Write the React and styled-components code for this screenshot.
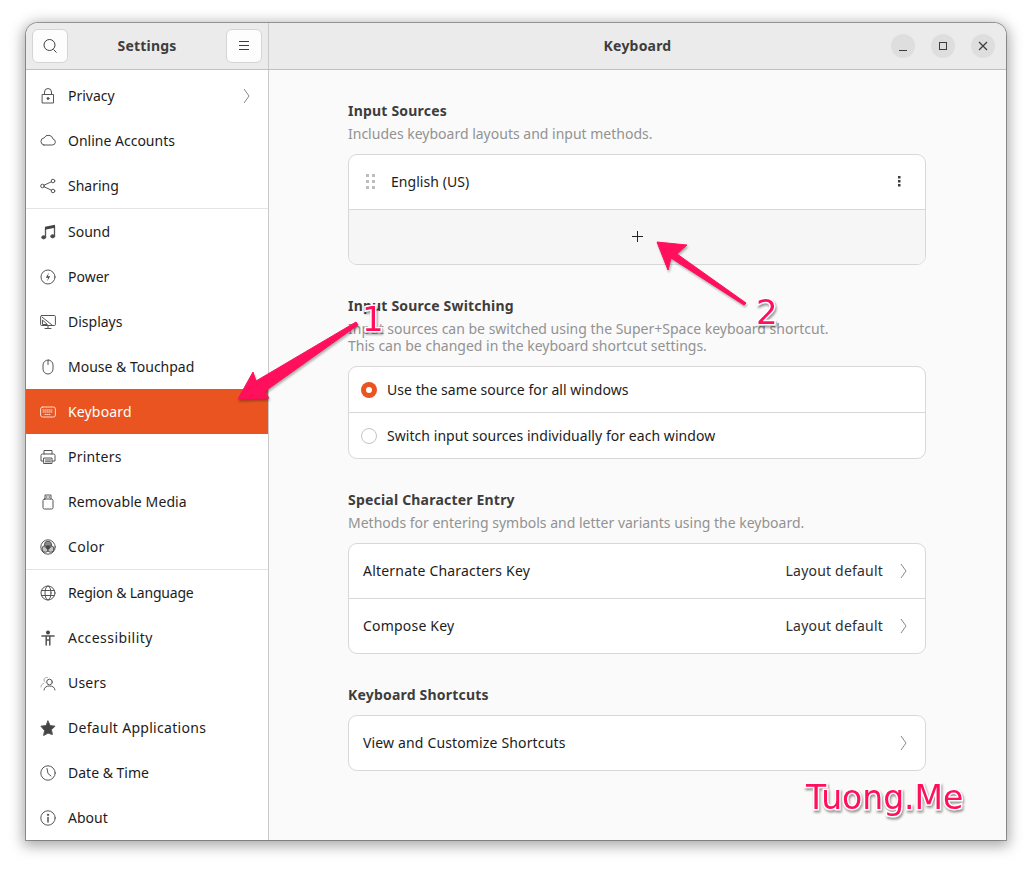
import React from 'react';
import styled, { createGlobalStyle } from 'styled-components';

const GlobalStyle = createGlobalStyle`
  html, body {
    margin: 0;
    padding: 0;
    background: #fff;
  }
  body {
    font-family: "Noto Sans", "Open Sans", sans-serif;
    font-size: 14px;
    color: #2e2e2e;
  }
`;

const Page = styled.div`
  position: relative;
  width: 1032px;
  height: 869px;
  padding: 23px 26px 29px;
  box-sizing: border-box;
  overflow: hidden;
`;

const Window = styled.div`
  width: 980px;
  height: 817px;
  display: flex;
  flex-direction: column;
  border-radius: 12px 12px 0 0;
  overflow: hidden;
  box-shadow: 0 0 0 1px rgba(0, 0, 0, 0.32), 0 3px 14px 3px rgba(0, 0, 0, 0.34);
  background: #fafafa;
`;

const TitleBar = styled.header`
  height: 46px;
  flex: none;
  display: flex;
  background: #ebebeb;
  border-bottom: 1px solid #c0c0c0;
`;

const SideHeader = styled.div`
  width: 243px;
  flex: none;
  display: flex;
  align-items: center;
  justify-content: space-between;
  padding: 0 6px;
  box-sizing: border-box;
  border-right: 1px solid #c9c9c9;
`;

const MainHeader = styled.div`
  flex: 1;
  position: relative;
  display: flex;
  align-items: center;
  justify-content: center;
`;

const HeaderTitle = styled.div`
  font-weight: 700;
  font-size: 14px;
  letter-spacing: 0.2px;
  color: #3d3d3d;
  margin-bottom: 2px;
`;

const ToolButton = styled.button`
  width: 36px;
  height: 34px;
  padding: 0;
  display: flex;
  align-items: center;
  justify-content: center;
  background: #fdfdfd;
  border: 1px solid #d4d4d4;
  border-radius: 6px;
`;

const WindowControls = styled.div`
  position: absolute;
  right: 11px;
  top: 11px;
  display: flex;
  gap: 16px;
`;

const ControlButton = styled.button`
  width: 24px;
  height: 24px;
  padding: 0;
  border: 0;
  border-radius: 50%;
  background: #dedede;
  display: flex;
  align-items: center;
  justify-content: center;
`;

const Body = styled.div`
  flex: 1;
  min-height: 0;
  display: flex;
`;

const Sidebar = styled.nav`
  width: 243px;
  flex: none;
  box-sizing: border-box;
  padding-top: 3px;
  background: #fff;
  border-right: 1px solid #c9c9c9;
`;

const NavGroup = styled.div`
  & + & {
    border-top: 1px solid #e4e4e4;
  }
`;

const NavRow = styled.div`
  height: 45px;
  display: flex;
  align-items: center;
  padding: 0 18px 0 14px;
  gap: 12px;
  color: ${p => (p.$active ? '#fff' : '#1c1c1c')};
  background: ${p => (p.$active ? '#e95420' : 'transparent')};
`;

const NavIcon = styled.svg`
  width: 16px;
  height: 16px;
  flex: none;
  fill: none;
  stroke: ${p => (p.$active ? '#fbdccf' : '#555')};
  stroke-width: 1;
  stroke-linecap: round;
  stroke-linejoin: round;
`;

const NavLabel = styled.span`
  flex: 1;
  white-space: nowrap;
  letter-spacing: ${p => p.$track || 0}px;
`;

const Content = styled.main`
  flex: 1;
  padding: 31px 80px 0 79px;
  background: #fafafa;
`;

const Section = styled.section`
  margin-bottom: ${p => p.$gap}px;
`;

const SectionTitle = styled.h2`
  margin: 0;
  font-size: 14px;
  line-height: 20px;
  font-weight: 700;
  letter-spacing: 0.2px;
  color: #3d3d3d;
`;

const SectionText = styled.p`
  margin: 4px 0 0;
  font-size: 14px;
  line-height: 17px;
  color: #929292;
`;

const Card = styled.div`
  margin-top: ${p => p.$top}px;
  background: #fff;
  border: 1px solid #d8d8d8;
  border-radius: 9px;
  overflow: hidden;
`;

const CardRow = styled.div`
  height: ${p => p.$height - (p.$lift ? 2 : 0)}px;
  display: flex;
  align-items: center;
  padding: 0 ${p => (p.$end ? 18 : 14)}px ${p => (p.$lift ? 2 : 0)}px ${p => p.$start || 14}px;
  color: #1c1c1c;
  background: ${p => (p.$muted ? '#f6f6f6' : 'transparent')};
  justify-content: ${p => (p.$center ? 'center' : 'flex-start')};
  & + & {
    border-top: 1px solid #d8d8d8;
  }
`;

const RowLabel = styled.span`
  flex: 1;
  letter-spacing: ${p => p.$track || 0.05}px;
`;

const RowValue = styled.span`
  margin-right: 17px;
  letter-spacing: 0.2px;
  color: #2e2e2e;
`;

const Grip = styled.svg`
  width: 12px;
  height: 16px;
  margin-right: 16px;
  fill: #bdbdbd;
`;

const RowMenu = styled.svg`
  width: 4px;
  height: 12px;
  margin-right: 10px;
  fill: #3d3d3d;
`;

const Chevron = styled.svg`
  width: 7px;
  height: 16px;
  flex: none;
  margin-top: ${p => (p.$drop ? 2 : 0)}px;
  fill: none;
  stroke: #7a7a7a;
  stroke-width: 0.9;
`;

const RadioOuter = styled.span`
  width: 16px;
  height: 16px;
  margin-right: 10px;
  flex: none;
  box-sizing: border-box;
  border-radius: 50%;
  display: flex;
  align-items: center;
  justify-content: center;
  background: ${p => (p.$on ? '#e95420' : '#fff')};
  border: ${p => (p.$on ? 'none' : '1px solid #c4c4c4')};
`;

const RadioDot = styled.span`
  width: 6px;
  height: 6px;
  border-radius: 50%;
  background: #fff;
`;

const Overlay = styled.svg`
  position: absolute;
  left: 0;
  top: 0;
  width: 1032px;
  height: 869px;
  pointer-events: none;
  filter: drop-shadow(1px 2px 1px rgba(0, 0, 0, 0.3));
`;

const Mark = styled.span`
  position: absolute;
  left: ${p => p.$x}px;
  top: ${p => p.$y}px;
  font-family: "DejaVu Sans", sans-serif;
  font-size: ${p => p.$size}px;
  line-height: 1;
  color: #ff0f5c;
  white-space: nowrap;
  -webkit-text-stroke: 3px #fff;
  paint-order: stroke fill;
  filter: drop-shadow(1px 2px 1px rgba(0, 0, 0, 0.4));
`;

const ChevronIcon = ({ drop }) => (
  <Chevron viewBox="0 0 7 16" $drop={drop}>
    <path d="M1 1l5 7-5 7" />
  </Chevron>
);

const icons = {
  lock: <><rect x="2.500" y="6.500" width="11" height="8.500" /><path d="M4.500 6.500V4a3.500 3.500 0 0 1 7 0v2.500" /><circle cx="8" cy="10.500" r="1" fill="#444" /></>,
  cloud: <path d="M4 13.500h8.500a3 3 0 0 0 .8-5.900A4.800 4.800 0 0 0 4.300 6.400 3.600 3.600 0 0 0 4 13.500z" transform="translate(-.2 -1.500)" />,
  share: <><circle cx="2.500" cy="8" r="1.800" /><circle cx="13" cy="3" r="1.800" /><circle cx="13" cy="13" r="1.800" /><path d="M4.100 7.200l7.300-3.400M4.100 8.800l7.300 3.400" /></>,
  music: <><path d="M5.500 13V4M14.500 12V2" strokeWidth="1.300" /><path d="M5 2.800l10-2v3l-10 2z" fill="#444" stroke="none" /><ellipse cx="3.700" cy="13.300" rx="2" ry="1.600" fill="#444" /><ellipse cx="12.700" cy="12.300" rx="2" ry="1.600" fill="#444" /></>,
  power: <><circle cx="8" cy="8" r="7" /><path d="M9 3.500L5.800 8.700h2.400L7 12.500l3.200-5.200H7.800z" fill="#444" stroke="none" /></>,
  display: <><rect x=".6" y="1.500" width="14.800" height="10" rx="1" /><path d="M5 14.500h6M8 11.500v3M2 3l10 8M2.500 6.500v4h4.500z" /></>,
  mouse: <><rect x="3" y="1" width="10" height="14" rx="5" /><path d="M8 1.500v4" /></>,
  keyboard: <><rect x=".6" y="3" width="14.800" height="10" rx="2" /><path d="M3 6h10M3 8h10M5 10.500h6" strokeDasharray="1 1" /></>,
  printer: <><path d="M4 5V1.500h8V5M3.500 12H1V6.500A1.500 1.500 0 0 1 2.500 5h11A1.500 1.500 0 0 1 15 6.500V12h-2.500" /><rect x="4" y="9" width="8" height="5.500" /><path d="M5.500 11h5M5.500 12.800h5" /></>,
  usb: <><rect x="3" y="5" width="10" height="10" rx="1.500" /><path d="M5 5V1h6v4M6.800 2.500v1M9.200 2.500v1" /></>,
  color: <><circle cx="8" cy="8" r="7.200" /><circle cx="8" cy="5.800" r="3.600" fill="#8a8a8a" /><circle cx="5.300" cy="10" r="3.300" fill="#8a8a8a" fillOpacity=".5" /><circle cx="10.700" cy="10" r="3.300" fill="#8a8a8a" fillOpacity=".5" /><circle cx="8" cy="8.300" r="2" fill="#444" stroke="none" /></>,
  globe: <><circle cx="8" cy="8" r="7" /><ellipse cx="8" cy="8" rx="3" ry="7" /><path d="M1.500 5.500h13M1.500 10.500h13" /></>,
  access: <><circle cx="8" cy="2.500" r="2" fill="#444" stroke="none" /><path d="M2 6h12" strokeWidth="1.600" /><path d="M6.200 6v9M9.800 6v9M6 10h4" strokeWidth="1.500" /></>,
  users: <><circle cx="9.500" cy="7" r="2.800" /><path d="M4 15c.5-3 2.500-4 5.500-4s5 1 5.500 4" /><path d="M7.500 2.500A2.500 2.500 0 0 0 4 5c0 1 .5 1.800 1 2.300M1 12c.2-2 1-3 2.500-3.500" stroke="#a8a8a8" /></>,
  star: <path d="M8 1l2.100 4.600 5 .6-3.700 3.400 1 4.900L8 13.100l-4.400 2.400 1-4.900L.9 6.200l5-.6z" fill="#444" />,
  clock: <><circle cx="8" cy="8" r="7.200" /><path d="M7 3.500l1 5 3 2.500" /></>,
  info: <><circle cx="8" cy="8" r="7.200" /><circle cx="8" cy="4.800" r=".7" fill="#444" /><path d="M8 7.500v4.500" strokeWidth="1.500" /></>,
};

const navGroups = [
  [
    { id: 'lock', label: 'Privacy', chevron: true },
    { id: 'cloud', label: 'Online Accounts' },
    { id: 'share', label: 'Sharing' },
  ],
  [
    { id: 'music', label: 'Sound' },
    { id: 'power', label: 'Power' },
    { id: 'display', label: 'Displays' },
    { id: 'mouse', label: 'Mouse & Touchpad' },
    { id: 'keyboard', label: 'Keyboard', active: true, track: 0.15 },
    { id: 'printer', label: 'Printers', track: 0.2 },
    { id: 'usb', label: 'Removable Media', track: 0.1 },
    { id: 'color', label: 'Color', track: 0.3 },
  ],
  [
    { id: 'globe', label: 'Region & Language', track: -0.2 },
    { id: 'access', label: 'Accessibility', track: 0.45 },
    { id: 'users', label: 'Users', track: 0.2 },
    { id: 'star', label: 'Default Applications', track: 0.3 },
    { id: 'clock', label: 'Date & Time' },
    { id: 'info', label: 'About' },
  ],
];

const App = () => (
  <Page>
    <GlobalStyle />
    <Window>
      <TitleBar>
        <SideHeader>
          <ToolButton>
            <svg width="16" height="16" viewBox="0 0 16 16" fill="none" stroke="#3d3d3d" strokeWidth="1">
              <circle cx="7.500" cy="7" r="5.500" />
              <path d="M11.500 11.500l3 3" />
            </svg>
          </ToolButton>
          <HeaderTitle>Settings</HeaderTitle>
          <ToolButton>
            <svg width="12" height="12" viewBox="0 0 12 12" stroke="#3d3d3d" strokeWidth="1">
              <path d="M1 1.500h10M1 5.500h10M1 9.500h10" />
            </svg>
          </ToolButton>
        </SideHeader>
        <MainHeader>
          <HeaderTitle>Keyboard</HeaderTitle>
          <WindowControls>
            <ControlButton>
              <svg width="10" height="10" viewBox="0 0 10 10" stroke="#3d3d3d" strokeWidth="1">
                <path d="M1 9.500h8" />
              </svg>
            </ControlButton>
            <ControlButton>
              <svg width="10" height="10" viewBox="0 0 10 10" fill="none" stroke="#3d3d3d" strokeWidth="1">
                <rect x="1.500" y="1.500" width="7" height="7" />
              </svg>
            </ControlButton>
            <ControlButton>
              <svg width="10" height="10" viewBox="0 0 10 10" stroke="#3d3d3d" strokeWidth="1.200">
                <path d="M1 1l8 8M9 1l-8 8" />
              </svg>
            </ControlButton>
          </WindowControls>
        </MainHeader>
      </TitleBar>
      <Body>
        <Sidebar>
          {navGroups.map((group, i) => (
            <NavGroup key={i}>
              {group.map(item => (
                <NavRow key={item.id} $active={item.active}>
                  <NavIcon viewBox="0 0 16 16" $active={item.active}>{icons[item.id]}</NavIcon>
                  <NavLabel $track={item.track}>{item.label}</NavLabel>
                  {item.chevron && <ChevronIcon />}
                </NavRow>
              ))}
            </NavGroup>
          ))}
        </Sidebar>
        <Content>
          <Section $gap={31}>
            <SectionTitle>Input Sources</SectionTitle>
            <SectionText>Includes keyboard layouts and input methods.</SectionText>
            <Card $top={12}>
              <CardRow $height={54} $lift>
                <Grip viewBox="0 0 12 16">
                  <rect x="3" y="1" width="3" height="3" />
                  <rect x="9" y="1" width="3" height="3" />
                  <rect x="3" y="7" width="3" height="3" />
                  <rect x="9" y="7" width="3" height="3" />
                  <rect x="3" y="13" width="3" height="3" />
                  <rect x="9" y="13" width="3" height="3" />
                </Grip>
                <RowLabel>English (US)</RowLabel>
                <RowMenu viewBox="0 0 4 12">
                  <rect x="1" y="1" width="2.500" height="2.500" />
                  <rect x="1" y="5" width="2.500" height="2.500" />
                  <rect x="1" y="9" width="2.500" height="2.500" />
                </RowMenu>
              </CardRow>
              <CardRow $height={54} $lift $muted $center>
                <svg width="11" height="11" viewBox="0 0 11 11" stroke="#222" strokeWidth="1">
                  <path d="M0 5.500h11M5.500 0v11" />
                </svg>
              </CardRow>
            </Card>
          </Section>
          <Section $gap={31}>
            <SectionTitle>Input Source Switching</SectionTitle>
            <SectionText>
              Input sources can be switched using the Super+Space keyboard shortcut.
              <br />
              This can be changed in the keyboard shortcut settings.
            </SectionText>
            <Card $top={12}>
              <CardRow $height={45} $start={12}>
                <RadioOuter $on><RadioDot /></RadioOuter>
                <RowLabel>Use the same source for all windows</RowLabel>
              </CardRow>
              <CardRow $height={45} $start={12}>
                <RadioOuter />
                <RowLabel>Switch input sources individually for each window</RowLabel>
              </CardRow>
            </Card>
          </Section>
          <Section $gap={31}>
            <SectionTitle>Special Character Entry</SectionTitle>
            <SectionText>Methods for entering symbols and letter variants using the keyboard.</SectionText>
            <Card $top={12}>
              <CardRow $height={54} $lift $end>
                <RowLabel $track={0.2}>Alternate Characters Key</RowLabel>
                <RowValue>Layout default</RowValue>
                <ChevronIcon drop />
              </CardRow>
              <CardRow $height={54} $lift $end>
                <RowLabel $track={0.2}>Compose Key</RowLabel>
                <RowValue>Layout default</RowValue>
                <ChevronIcon drop />
              </CardRow>
            </Card>
          </Section>
          <Section $gap={0}>
            <SectionTitle>Keyboard Shortcuts</SectionTitle>
            <Card $top={10}>
              <CardRow $height={54} $lift $end>
                <RowLabel $track={0.15}>View and Customize Shortcuts</RowLabel>
                <ChevronIcon drop />
              </CardRow>
            </Card>
          </Section>
        </Content>
      </Body>
    </Window>
    <Overlay viewBox="0 0 1032 869">
      <path d="M238 399L253 372 L256 381 L356 322 L358 325 L264 392 L269 398z" fill="#ff0f5c" stroke="#ff0f5c" strokeWidth="1" strokeLinejoin="round" />
      <path d="M657 242L687 245 L677 254 L746 303 L744 305 L671 258 L668 270z" fill="#ff0f5c" stroke="#ff0f5c" strokeWidth="1" strokeLinejoin="round" />
    </Overlay>
    <Mark $x={362} $y={302} $size={34}>1</Mark>
    <Mark $x={756} $y={295} $size={34}>2</Mark>
    <Mark $x={806} $y={781} $size={33}>Tuong.Me</Mark>
  </Page>
);

export default App;
